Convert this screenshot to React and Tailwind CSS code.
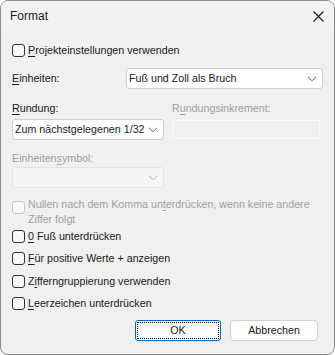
import React from 'react';

const Chevron = ({ className }) => (
  <svg className={className} width="10" height="6" viewBox="0 0 10 6" fill="none" stroke="currentColor">
    <path d="M1 0.8 L5 4.8 L9 0.8" strokeWidth="1" />
  </svg>
);

const CloseIcon = () => (
  <svg width="11" height="11" viewBox="0 0 11 11" fill="none" stroke="#1a1a1a">
    <path d="M0.5 0.5 L10.5 10.5 M10.5 0.5 L0.5 10.5" strokeWidth="1.1" />
  </svg>
);

// Text with one underlined access key
const Key = ({ before = '', k, after = '' }) => (
  <>
    {before}
    <span className="underline underline-offset-[2px] decoration-1">{k}</span>
    {after}
  </>
);

const CheckBox = ({ disabled }) => (
  <span
    className={`block shrink-0 w-[13px] h-[13px] rounded-[3px] border bg-[#f7f7f7] ${
      disabled ? 'border-[#c6c6c6]' : 'border-[#333333]'
    }`}
  />
);

const CheckRow = ({ children, className = '' }) => (
  <label className={`flex items-center gap-[3px] h-[22px] ${className}`}>
    <CheckBox />
    <span>{children}</span>
  </label>
);

const Combo = ({ value, disabled, className = '' }) => (
  <div
    className={`flex items-center justify-between h-[21px] rounded-[3px] border pl-[2px] pr-[5px] ${
      disabled ? 'bg-[#f5f5f5] border-[#e3e3e3] text-[#a0a0a0]' : 'bg-white border-[#d0d0d0]'
    } ${className}`}
  >
    <span className="whitespace-nowrap">{value}</span>
    <Chevron className={disabled ? 'text-[#b0b0b0]' : 'text-[#606060]'} />
  </div>
);

export default function App() {
  return (
    <div
      className="w-[335px] h-[355px] flex flex-col rounded-[8px] border border-[#8c8c8c] bg-[#f0f0f0] overflow-hidden text-[10.7px] text-[#1a1a1a]"
      style={{ fontFamily: '"Liberation Sans", Arial, sans-serif' }}
    >
      {/* Title bar */}
      <div className="h-[30px] shrink-0 flex items-center justify-between pl-[9px] pr-[10px] bg-[#f3f3f3]">
        <span className="text-[12px]">Format</span>
        <CloseIcon />
      </div>

      {/* Content */}
      <div className="flex flex-col px-[11px] pt-[8px]">
        <CheckRow>
          <Key k="P" after="rojekteinstellungen verwenden" />
        </CheckRow>

        <div className="flex items-center justify-between mt-[7px]">
          <span>
            <Key k="E" after="inheiten:" />
          </span>
          <Combo value="Fuß und Zoll als Bruch" className="w-[197px]" />
        </div>

        <div className="grid grid-cols-[152px_148px] gap-x-[8px] mt-[11px]">
          <span className="h-[16px] leading-[16px]">
            <Key k="R" after="undung:" />
          </span>
          <span className="h-[16px] leading-[16px] text-[#a0a0a0]">
            <Key before="R" k="u" after="ndungsinkrement:" />
          </span>
          <Combo value="Zum nächstgelegenen 1/32" className="mt-[3px]" />
          <div className="mt-[4px] h-[19px] border border-[#fafafa] bg-[#f0f0f0]" />
        </div>

        <span className="h-[16px] leading-[16px] mt-[10px] text-[#a0a0a0]">
          <Key before="Einheiten" k="s" after="ymbol:" />
        </span>
        <Combo disabled value="" className="w-[152px] mt-[1px]" />

        <div className="flex items-start gap-[3px] mt-[8px] text-[#a0a0a0]">
          <span className="mt-[5px]">
            <CheckBox disabled />
          </span>
          <span className="leading-[15px] pt-[1px]">
            Nullen nach dem Komma un<span className="underline underline-offset-[2px] decoration-1">t</span>erdrücken, wenn keine andere Ziffer folgt
          </span>
        </div>

        <CheckRow className="-mt-[2px]">
          <Key k="0" after=" Fuß unterdrücken" />
        </CheckRow>
        <CheckRow>
          <Key k="F" after="ür positive Werte + anzeigen" />
        </CheckRow>
        <CheckRow className="mt-[1px]">
          <Key before="Z" k="i" after="fferngruppierung verwenden" />
        </CheckRow>
        <CheckRow>
          <Key k="L" after="eerzeichen unterdrücken" />
        </CheckRow>

        <div className="flex justify-end gap-[9px] mt-[6px] pr-[5px]">
          <button className="w-[86px] h-[21px] rounded-[3px] border border-[#0067c0] bg-[#fdfdfd] p-[1px]">
            <span className="flex items-center justify-center w-full h-full border border-dotted border-black">
              OK
            </span>
          </button>
          <button className="w-[88px] h-[21px] rounded-[4px] border border-[#d0d0d0] bg-[#fdfdfd]">
            Abbrechen
          </button>
        </div>
      </div>
    </div>
  );
}
